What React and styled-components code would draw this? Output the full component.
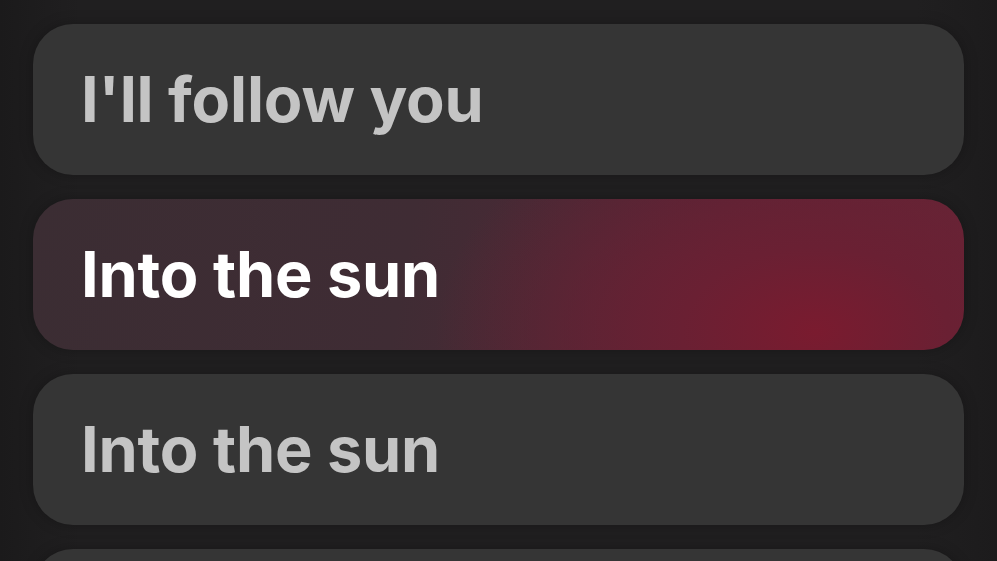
import React from 'react'
import styled, { createGlobalStyle } from 'styled-components'

const Global = createGlobalStyle`
  html, body { margin: 0; padding: 0; background: #1f1e1f; }
  body { font-family: Inter, "Noto Sans", sans-serif; overflow: hidden; }
`

const Page = styled.div`
  width: 997px;
  height: 561px;
  background: linear-gradient(90deg, #1b1a1b 0%, #201f20 8%, #201f20 92%, #1c1b1c 100%);
  overflow: hidden;
`

const List = styled.div`
  display: flex;
  flex-direction: column;
  gap: 24px;
  padding: 24px 33px 0 33px;
`

const Line = styled.div`
  height: 151px;
  flex-shrink: 0;
  border-radius: 40px;
  display: flex;
  align-items: center;
  padding: 0 0 0 48px;
  box-sizing: border-box;
  background: ${({ active }) => active
    ? 'radial-gradient(ellipse 380px 240px at 84% 88%, #7a1b2f 0%, #6a2033 35%, rgba(70,42,52,0) 100%), linear-gradient(100deg, #3b2d33 0%, #3f2c34 40%, #552636 72%, #662738 100%)'
    : '#353535'};
  box-shadow: 0 0 14px rgba(0,0,0,0.25);
`

const Lyric = styled.span`
  font-size: 63px;
  font-weight: 700;
  letter-spacing: -0.2px;
  color: ${({ active }) => active ? '#ffffff' : '#c4c4c4'};
  margin-top: -2px;
`

const lines = [
  { text: "I'll follow you" },
  { text: 'Into the sun', active: true },
  { text: 'Into the sun' },
  { text: '' },
]

export default function App() {
  return (
    <Page>
      <Global />
      <List>
        {lines.map((l, i) => (
          <Line key={i} active={l.active}>
            <Lyric active={l.active}>{l.text}</Lyric>
          </Line>
        ))}
      </List>
    </Page>
  )
}
